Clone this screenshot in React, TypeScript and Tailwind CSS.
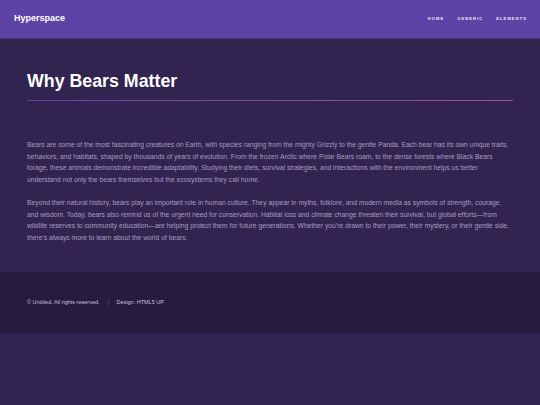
import React from 'react';

const navItems = ['Home', 'Generic', 'Elements'];

export default function App() {
  return (
    <div
      className="min-h-[405px] bg-[#312450] text-white"
      style={{ fontFamily: '"Liberation Sans", Arial, sans-serif' }}
    >
      {/* Header */}
      <header className="flex h-[39px] items-center justify-between border-b border-[#46357a] bg-[#5e42a6] pl-[14px] pr-[13px]">
        <span className="text-[9px] font-bold">Hyperspace</span>
        <nav className="flex items-center gap-[13px]">
          {navItems.map((item) => (
            <span
              key={item}
              className="text-[4px] font-bold uppercase tracking-[0.28em] text-white/90"
            >
              {item}
            </span>
          ))}
        </nav>
      </header>

      {/* Main */}
      <main className="px-[27px] pb-[28px] pt-[29px]">
        <h1 className="text-[17.8px] font-bold leading-[26px]">Why Bears Matter</h1>
        <div className="mt-[6px] h-px w-full bg-gradient-to-r from-[#5a469c] to-[#a64e8c]" />

        <div className="mt-[38px] space-y-[11px] text-[6.75px] leading-[11.7px] text-[#a69dc0]">
          <p>
            Bears are some of the most fascinating creatures on Earth, with species ranging from the mighty
            Grizzly to the gentle Panda. Each bear has its own unique traits, behaviors, and habitats, shaped by
            thousands of years of evolution. From the frozen Arctic where Polar Bears roam, to the dense forests
            where Black Bears forage, these animals demonstrate incredible adaptability. Studying their diets,
            survival strategies, and interactions with the environment helps us better understand not only the
            bears themselves but the ecosystems they call home.
          </p>
          <p>
            Beyond their natural history, bears play an important role in human culture. They appear in myths,
            folklore, and modern media as symbols of strength, courage, and wisdom. Today, bears also remind us of
            the urgent need for conservation. Habitat loss and climate change threaten their survival, but global
            efforts—from wildlife reserves to community education—are helping protect them for future generations.
            Whether you’re drawn to their power, their mystery, or their gentle side, there’s always more to learn
            about the world of bears.
          </p>
        </div>
      </main>

      {/* Footer */}
      <footer className="flex h-[61px] items-center bg-[#261c40] px-[27px] text-[5.5px] text-[#c9c3da]">
        <span>© Untitled. All rights reserved.</span>
        <span className="mx-[8px] h-[7px] w-px bg-white/10" />
        <span>Design: HTML5 UP</span>
      </footer>
    </div>
  );
}
